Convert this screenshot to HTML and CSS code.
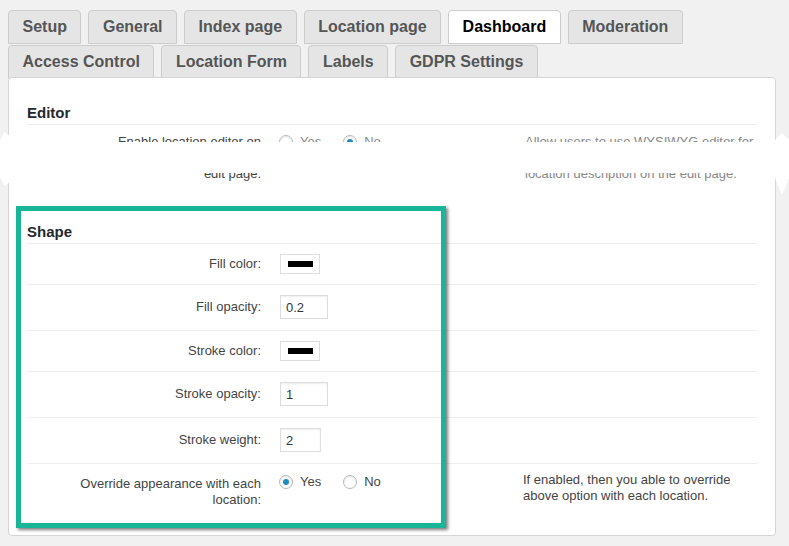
FILE: index.html
```html
<!DOCTYPE html>
<html>
<head>
<title>Settings - Dashboard</title>
<meta name="viewport" content="width=device-width">
<link rel="stylesheet" href="styles.css">
</head>
<body>

<div class="wrap">
  <nav class="tabs">
    <a class="tab">Setup</a>
    <a class="tab">General</a>
    <a class="tab">Index page</a>
    <a class="tab">Location page</a>
    <a class="tab active">Dashboard</a>
    <a class="tab">Moderation</a>
    <a class="tab">Access Control</a>
    <a class="tab">Location Form</a>
    <a class="tab">Labels</a>
    <a class="tab">GDPR Settings</a>
  </nav>

  <div class="panel">
    <h2 class="section-title">Editor</h2>
    <div class="cut">
      <div class="frag frag-top">
        <div class="label">Enable location editor on</div>
        <div class="field">
          <label class="radio"><input type="radio" name="editor"> Yes</label>
          <label class="radio"><input type="radio" name="editor" checked> No</label>
        </div>
        <div class="desc">Allow users to use WYSIWYG editor for</div>
      </div>
      <div class="frag frag-bottom">
        <div class="label">edit page.</div>
        <div class="field"></div>
        <div class="desc">location description on the edit page.</div>
      </div>
    </div>

    <h2 class="section-title">Shape</h2>
    <div class="row swatch-row">
      <div class="label">Fill color:</div>
      <div class="field"><span class="swatch"><span class="swatch-bar"></span></span></div>
    </div>
    <div class="row">
      <div class="label">Fill opacity:</div>
      <div class="field"><input class="text w48" type="text" value="0.2"></div>
    </div>
    <div class="row swatch-row">
      <div class="label">Stroke color:</div>
      <div class="field"><span class="swatch"><span class="swatch-bar"></span></span></div>
    </div>
    <div class="row">
      <div class="label">Stroke opacity:</div>
      <div class="field"><input class="text w48" type="text" value="1"></div>
    </div>
    <div class="row">
      <div class="label">Stroke weight:</div>
      <div class="field"><input class="text w41" type="text" value="2"></div>
    </div>
    <div class="row last">
      <div class="label">Override appearance with each location:</div>
      <div class="field radios">
        <label class="radio"><input type="radio" name="override" checked> Yes</label>
        <label class="radio"><input type="radio" name="override"> No</label>
      </div>
      <div class="desc">If enabled, then you able to override above option with each location.</div>
    </div>

    <div class="highlight"></div>
  </div>
</div>

<div class="tear tear-left"></div>
<div class="tear tear-right"></div>

</body>
</html>
```

FILE: styles.css
```css
* {box-sizing: border-box}
html {
  margin: 0; padding: 0;
}
body {
  margin: 0; padding: 0;
  background: #f1f1f1;
  font-family: "Liberation Sans", Arial, sans-serif;
  font-size: 13px;
  color: #444;
}

.wrap {
  padding: 10px 13px 11px 8px;
}

/* tabs */
.tabs {
  display: flex;
  flex-wrap: wrap;
  column-gap: 7px;
  row-gap: 1px;
}
.tab {
  height: 34px;
  line-height: 32px;
  padding: 0 13.5px;
  border: 1px solid #ccc;
  border-radius: 4px 4px 0 0;
  background: #e5e5e5;
  color: #555;
  font-size: 16px;
  font-weight: bold;
  white-space: nowrap;
}
.tab.active {
  background: #fff;
  color: #000;
}

/* panel */
.panel {
  position: relative;
  margin-top: -2px;
  background: #fff;
  border: 1px solid #d5d5d5;
  border-radius: 4px;
  padding: 25px 18px 15px 18px;
}
.section-title {
  margin: 0;
  font-size: 15px;
  line-height: 20px;
  font-weight: bold;
  color: #23282d;
  padding-bottom: 1px;
  border-bottom: 1px solid #eee;
}

.row, .frag {
  display: flex;
  align-items: center;
}
.row {
  padding: 10px 0 11px;
  border-bottom: 1px solid #eee;
}
.row.swatch-row {
  padding-bottom: 10px;
}
.row.last {
  align-items: flex-start;
  padding: 12px 0 12px;
  border-bottom: none;
}
.label {
  width: 200px;
  margin-left: 34px;
  text-align: right;
  line-height: 16px;
  color: #444;
}
.field {
  width: 243px;
  margin-left: 19px;
  display: flex;
  align-items: center;
  line-height: 16px;
}
.radios {
  margin-top: -2px;
}
.desc {
  flex: 1;
  line-height: 16px;
}
.row.last .desc {
  margin-top: -4px;
  padding-right: 20px;
}

/* cut off editor rows */
.cut {
  height: 97px;
  padding-top: 9px;
}
.frag {
  height: 16px;
  white-space: nowrap;
  color: #888;
}
.frag .radio {
  color: #888;
}
.frag-top {
  clip-path: inset(0 0 8px 0);
}
.frag-bottom {
  margin-top: 16px;
  clip-path: inset(7px 0 0 0);
}
.frag .desc {
  padding-left: 2px;
}

/* inputs */
.text {
  height: 24px;
  margin: 0;
  padding: 0 5px;
  border: 1px solid #ddd;
  border-radius: 0;
  box-shadow: inset 0 1px 2px rgba(0,0,0,0.07);
  font-family: "Liberation Sans", Arial, sans-serif;
  font-size: 13px;
  color: #32373c;
  background: #fff;
}
.w48 { width: 48px; }
.w41 { width: 41px; }

.swatch {
  display: flex;
  align-items: center;
  justify-content: center;
  width: 40px;
  height: 20px;
  border: 1px solid #ddd;
  background: #fff;
}
.swatch-bar {
  width: 25px;
  height: 6px;
  background: #000;
}

.radio {
  display: inline-flex;
  align-items: center;
  margin-right: 23px;
  color: #444;
}
.radio input {
  -webkit-appearance: none;
  appearance: none;
  width: 14px;
  height: 14px;
  margin: 0 7px 0 -1px;
  border: 1px solid #b4b9be;
  border-radius: 50%;
  background: #fff;
  box-shadow: inset 0 1px 2px rgba(0,0,0,0.1);
}
.radio input:checked::before {
  content: "";
  display: block;
  width: 6px;
  height: 6px;
  margin: 3px;
  border-radius: 50%;
  background: #1e8cbe;
}

/* screenshot annotation */
.highlight {
  position: absolute;
  left: 7px;
  top: 128px;
  width: 430px;
  height: 322px;
  border: 5px solid #18b596;
  box-shadow: 2px 2px 3px rgba(0,0,0,0.5);
  pointer-events: none;
}

.tear {
  position: absolute;
  background: #fff;
}
.tear-left {
  left: 0;
  top: 132px;
  width: 10px;
  height: 54px;
  clip-path: polygon(0 9px, 4px 0, 10px 4px, 10px 50px, 4px 54px, 0 45px);
}
.tear-right {
  left: 775px;
  top: 133px;
  width: 14px;
  height: 62px;
  clip-path: polygon(0 7px, 7px 0, 14px 7px, 14px 45px, 7px 62px, 0 45px);
}
```
